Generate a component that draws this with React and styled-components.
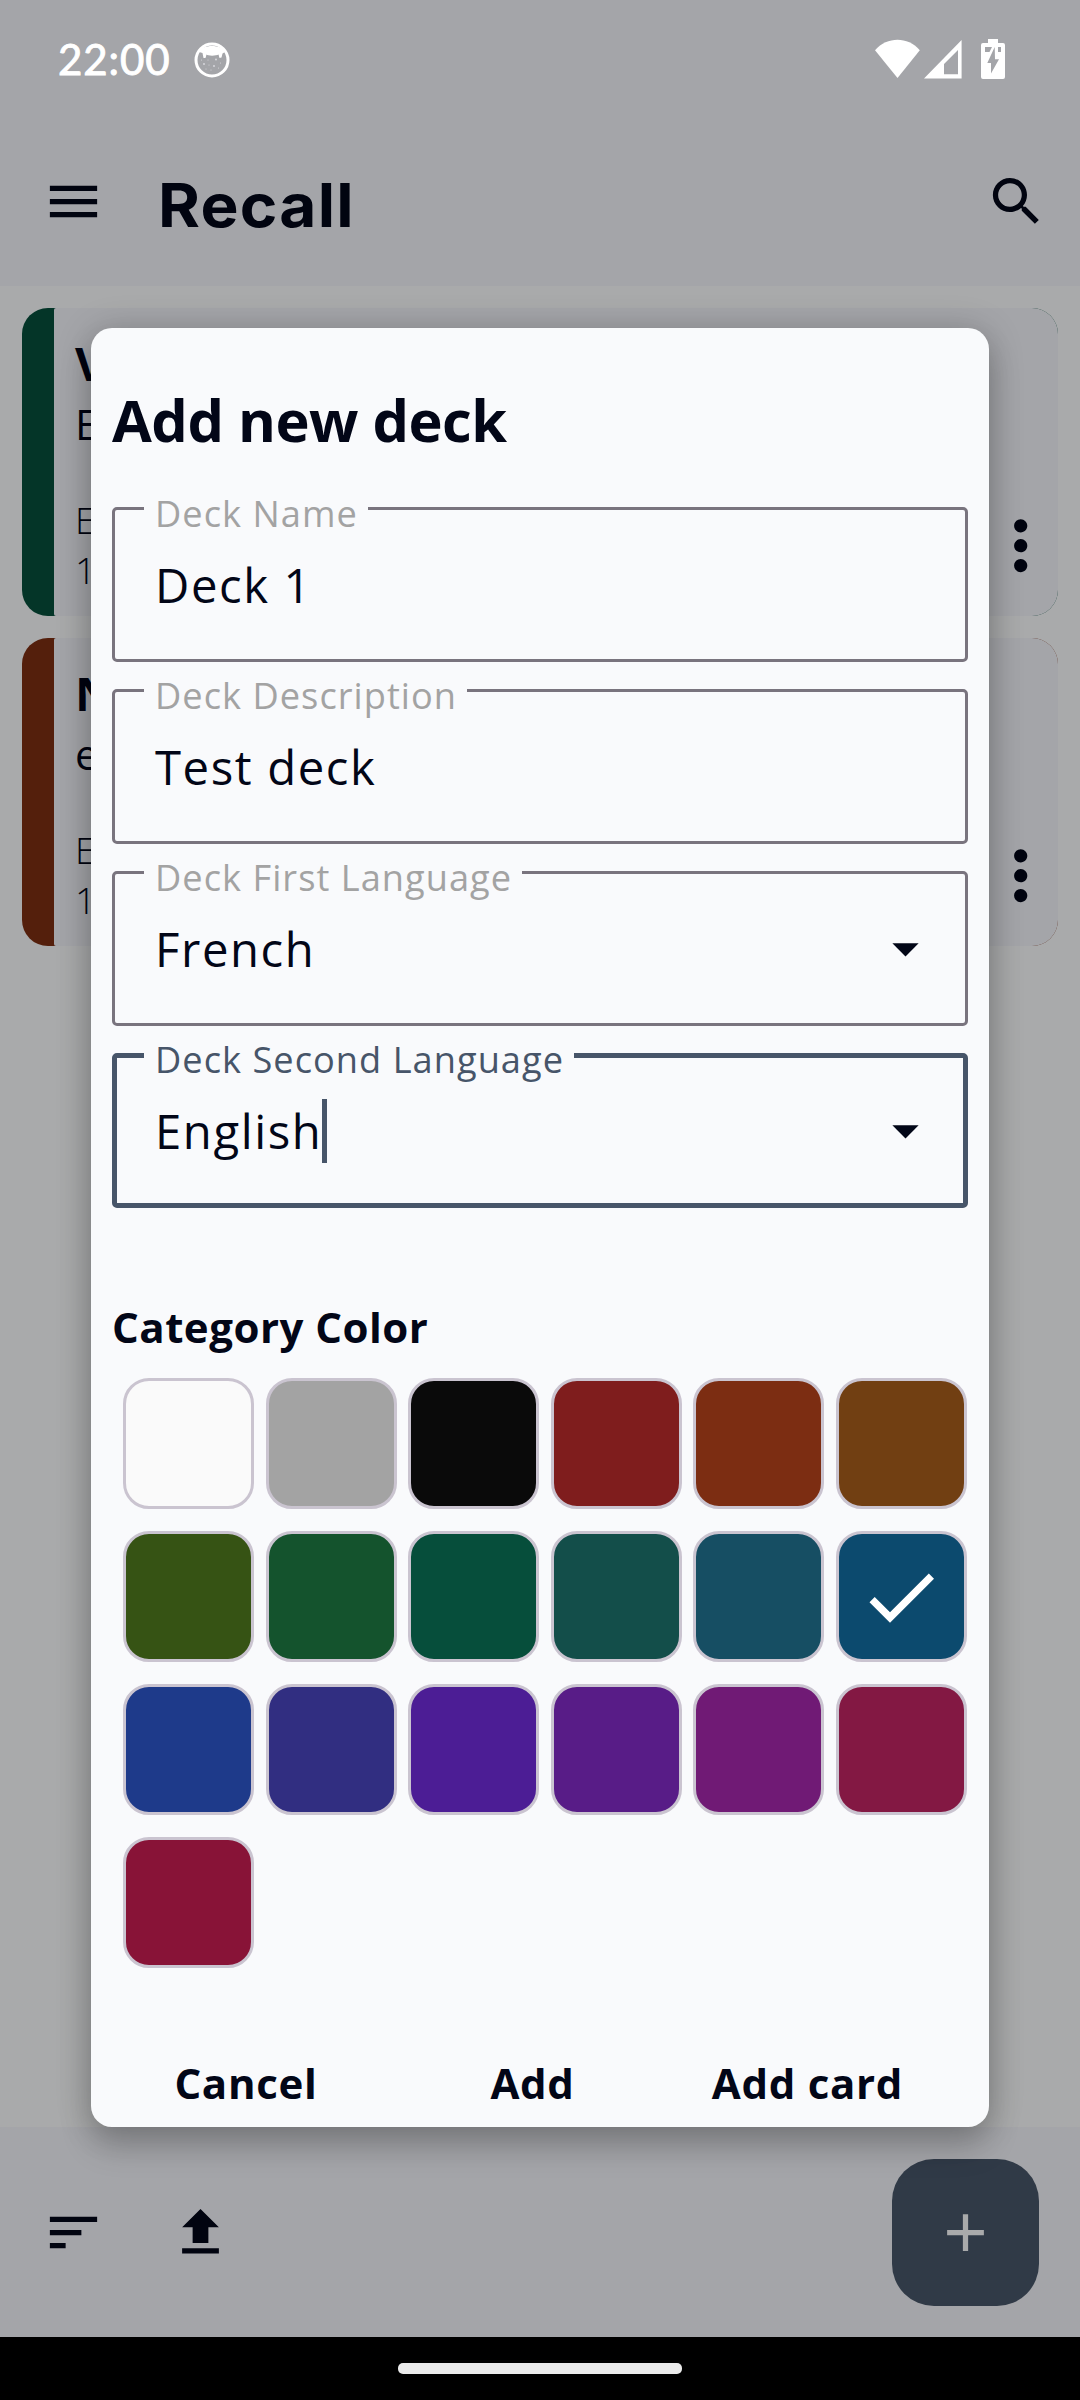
import React from "react";
import styled, { createGlobalStyle } from "styled-components";

const INK = "#020617";
const DIM_INK = "#010410";
const BAR = "#a4a5a9";

const GlobalStyle = createGlobalStyle`
  * { box-sizing: border-box; }
  body { margin: 0; background: #000; font-family: "Open Sans", "Noto Sans", sans-serif; }
`;

const Screen = styled.div`
  position: relative;
  width: 1080px;
  height: 2400px;
  overflow: hidden;
  display: flex;
  flex-direction: column;
  background: #a9aaab;
  color: ${DIM_INK};
`;

const TopArea = styled.header`
  height: 286px;
  flex: none;
  background: ${BAR};
`;

const StatusBar = styled.div`
  height: 117px;
  padding: 0 74px 0 58px;
  display: flex;
  align-items: center;
  color: #fff;
`;

const Clock = styled.span`
  width: 136px;
  font: 400 42px/50px Lato, sans-serif;
  letter-spacing: 0.9px;
  -webkit-text-stroke: 0.9px #fff;
`;

const MascotIcon = styled.svg`
  display: block;
  flex: none;
  margin-top: 2px;
`;

const StatusIcons = styled.div`
  margin-left: auto;
  display: flex;
  height: 42px;
`;

const AppBar = styled.div`
  height: 169px;
  padding: 0 32px 0 42px;
  display: flex;
  align-items: center;
`;

const AppTitle = styled.h1`
  margin: 6px auto 0 53px;
  font: 700 60px/72px Inter, sans-serif;
  letter-spacing: 1.2px;
  transform: scaleX(1.065);
  transform-origin: left;
`;

const Icon = styled.svg`
  display: block;
  flex: none;
  width: ${(p) => p.$size || 63}px;
  height: ${(p) => p.$size || 63}px;
  fill: currentColor;
`;

const DeckList = styled.main`
  flex: 1;
  padding: 22px;
  display: flex;
  flex-direction: column;
  gap: 22px;
`;

const DeckCard = styled.article`
  height: 308px;
  padding-left: 32px;
  border-radius: 26px;
  background: ${(p) => p.$accent};
`;

const DeckBody = styled.div`
  height: 308px;
  border-radius: 2px 26px 26px 2px;
  background: #a4a5a9;
  padding: 23px 0 0 21px;
  display: flex;
  justify-content: space-between;
`;

const DeckText = styled.div`
  display: flex;
  flex-direction: column;
`;

const DeckName = styled.div`
  font-size: 47.25px;
  line-height: 64px;
  font-weight: 700;
`;

const DeckNote = styled.div`
  font-size: 42px;
  line-height: 58px;
  margin-bottom: 42px;
`;

const DeckMeta = styled.div`
  font-size: 36.75px;
  line-height: 50px;
  font-weight: 300;
`;

const MoreSlot = styled.div`
  margin: 175px -2px 0 0;
`;

const BottomBar = styled.footer`
  height: 210px;
  flex: none;
  padding: 0 41px 0 42px;
  display: flex;
  align-items: center;
  gap: 64px;
  background: ${BAR};
`;

const Fab = styled.button`
  margin-left: auto;
  width: 147px;
  height: 147px;
  padding: 0;
  border: 0;
  border-radius: 42px;
  display: grid;
  place-items: center;
  background: #303a47;
  color: #a9aaab;
`;

const NavBar = styled.div`
  height: 63px;
  flex: none;
  padding-top: 26px;
  background: #000;
`;

const NavPill = styled.div`
  width: 284px;
  height: 11px;
  margin: 0 auto;
  border-radius: 5px;
  background: #ebebeb;
`;

const Dialog = styled.section`
  position: absolute;
  left: 91px;
  top: 328px;
  width: 898px;
  height: 1799px;
  padding: 52px 21px 0;
  border-radius: 21px;
  background: #f9fafc;
  color: ${INK};
  box-shadow: 0 20px 32px rgba(0, 0, 0, 0.18), 0 2px 36px rgba(0, 0, 0, 0.2);
`;

const DialogTitle = styled.h2`
  margin: 0;
  height: 79px;
  font-size: 57.75px;
  line-height: 79px;
  font-weight: 700;
  letter-spacing: -0.5px;
`;

const Fields = styled.div`
  margin-top: 24px;
  display: flex;
  flex-direction: column;
  gap: 3px;
`;

const Field = styled.fieldset`
  height: 179px;
  margin: 0;
  min-width: 0;
  border: ${(p) => (p.$focused ? "5px solid #475569" : "3px solid #79747e")};
  border-radius: 5px;
  padding: 0 ${(p) => (p.$focused ? 26 : 28)}px 0 ${(p) => (p.$focused ? 38 : 40)}px;
`;

const Legend = styled.legend`
  margin-left: -11px;
  padding: 0 10px 0 11px;
  height: ${(p) => (p.$focused ? 53 : 51)}px;
  font-size: 36.2px;
  line-height: 60px;
  letter-spacing: 1.03px;
  color: ${(p) => (p.$focused ? "#475569" : "#a3a3a3")};
`;

const Value = styled.div`
  height: 64px;
  margin-top: ${(p) => (p.$focused ? 17 : 19)}px;
  display: flex;
  align-items: center;
  font-size: 47.25px;
  line-height: 64px;
  letter-spacing: 1.6px;
`;

const Caret = styled.span`
  width: 5px;
  height: 64px;
  background: #475569;
`;

const DropIcon = styled(Icon)`
  margin: -2px 0 0 auto;
`;

const SectionTitle = styled.h3`
  margin: 90px 0 0;
  font-size: 42px;
  line-height: 58px;
  font-weight: 700;
  letter-spacing: 0.5px;
`;

const Swatches = styled.div`
  margin: 22px 0 0 11px;
  display: grid;
  grid-template-columns: repeat(6, 131px);
  column-gap: 11.6px;
  row-gap: 22px;
`;

const Swatch = styled.button`
  width: 131px;
  height: 131px;
  padding: 0;
  display: grid;
  place-items: center;
  border: 3px solid #cac4d0;
  border-radius: 26px;
  background: ${(p) => p.$color};
  color: #fff;
`;

const Actions = styled.div`
  margin-top: 86px;
  display: grid;
  grid-template-columns: 268px 305px 245px;
`;

const Action = styled.button`
  padding: 0;
  border: 0;
  background: none;
  color: inherit;
  font: 700 42px/58px "Open Sans", sans-serif;
  letter-spacing: 0.7px;
  white-space: nowrap;
`;

const decks = [
  { accent: "#043528", name: "V", note: "E", meta: ["E", "1"] },
  { accent: "#541f0c", name: "N", note: "e", meta: ["E", "1"] },
];

const fields = [
  { label: "Deck Name", value: "Deck 1" },
  { label: "Deck Description", value: "Test deck" },
  { label: "Deck First Language", value: "French", menu: true },
  { label: "Deck Second Language", value: "English", menu: true, focused: true },
];

const colors = [
  "#fafafa", "#a3a3a3", "#0a0a0a", "#7f1d1d", "#7c2d12", "#713f12",
  "#365314", "#14532d", "#064e3b", "#134e4a", "#164e63", "#0c4a6e",
  "#1e3a8a", "#312e81", "#4c1d95", "#581c87", "#701a75", "#831843",
  "#881337",
];
const selected = "#0c4a6e";

const Glyph = ({ d, size, as: Tag = Icon }) => (
  <Tag viewBox="0 0 24 24" $size={size}>
    <path d={d} />
  </Tag>
);

const Mascot = () => (
  <MascotIcon width="36" height="36" viewBox="0 0 36 36">
    <circle cx="18" cy="18" r="16" fill="none" stroke="#fff" strokeWidth="3" />
    <path
      fill="#fff"
      d="M5 10C8 2 28 2 31 10L28.500 11.500 27.500 15.500 25.500 16 24.500 12.500C22.500 14 13.500 14 12.500 12.500L11.500 16 9.500 16 8.500 11Z"
    />
    <g fill="#dcdce0">
      <circle cx="10" cy="22" r=".9" />
      <circle cx="20" cy="24" r=".9" />
      <circle cx="22" cy="17.500" r=".9" />
      <circle cx="14" cy="18" r=".5" />
      <circle cx="15" cy="23" r=".5" />
      <circle cx="12" cy="27" r=".5" />
      <circle cx="17" cy="28" r=".5" />
      <circle cx="24.500" cy="26" r=".5" />
      <circle cx="26.500" cy="21" r=".5" />
      <circle cx="7.500" cy="18" r=".5" />
    </g>
  </MascotIcon>
);

const SystemIcons = () => (
  <svg width="132" height="42" viewBox="0 0 132 42" fill="#fff">
    <path d="M1 12.200C13.500-1.700 33.500-1.700 45.800 12.200L23.500 40Z" />
    <path fillRule="evenodd" d="M87.600 2V40.500H50ZM84 12L70 26V36.300H84Z" />
    <path
      fillRule="evenodd"
      d="M114 1H124V5H129Q131 5 131 7V39Q131 41 129 41H109Q107 41 107 39V7Q107 5 109 5H114ZM111 9V14H115.500L118 9ZM124 9V14H127V9ZM120.700 9L113.300 25H117V35.500L125 21.300H121Z"
    />
  </svg>
);

export default function App() {
  return (
    <>
      <GlobalStyle />
      <Screen>
        <TopArea>
          <StatusBar>
            <Clock>22:00</Clock>
            <Mascot />
            <StatusIcons>
              <SystemIcons />
            </StatusIcons>
          </StatusBar>
          <AppBar>
            <Glyph d="M3 18h18v-2H3v2zm0-5h18v-2H3v2zm0-7v2h18V6H3z" />
            <AppTitle>Recall</AppTitle>
            <Glyph d="M15.5 14h-.79l-.28-.27C15.410 12.590 16 11.110 16 9.500 16 5.910 13.090 3 9.500 3S3 5.910 3 9.500 5.910 16 9.500 16c1.610 0 3.090-.59 4.230-1.570l.27.28v.79l5 4.990L20.490 19l-4.990-5zm-6 0C7.010 14 5 11.990 5 9.500S7.010 5 9.500 5 14 7.010 14 9.500 11.990 14 9.500 14z" />
          </AppBar>
        </TopArea>

        <DeckList>
          {decks.map((deck) => (
            <DeckCard key={deck.accent} $accent={deck.accent}>
              <DeckBody>
                <DeckText>
                  <DeckName>{deck.name}</DeckName>
                  <DeckNote>{deck.note}</DeckNote>
                  {deck.meta.map((line) => (
                    <DeckMeta key={line}>{line}</DeckMeta>
                  ))}
                </DeckText>
                <MoreSlot>
                  <Glyph
                    size={79.4}
                    d="M12 8c1.100 0 2-.9 2-2s-.9-2-2-2-2 .9-2 2 .9 2 2 2zm0 2c-1.100 0-2 .9-2 2s.9 2 2 2 2-.9 2-2-.9-2-2-2zm0 6c-1.100 0-2 .9-2 2s.9 2 2 2 2-.9 2-2-.9-2-2-2z"
                  />
                </MoreSlot>
              </DeckBody>
            </DeckCard>
          ))}
        </DeckList>

        <BottomBar>
          <Glyph d="M3 18h6v-2H3v2zM3 6v2h18V6H3zm0 7h12v-2H3v2z" />
          <Glyph d="M5 20h14v-2H5v2zM9 16h6v-6h4l-7-7-7 7h4v6z" />
          <Fab aria-label="Add">
            <Glyph d="M19 13h-6v6h-2v-6H5v-2h6V5h2v6h6v2z" />
          </Fab>
        </BottomBar>
        <NavBar>
          <NavPill />
        </NavBar>

        <Dialog role="dialog">
          <DialogTitle>Add new deck</DialogTitle>
          <Fields>
            {fields.map(({ label, value, menu, focused }) => (
              <Field key={label} $focused={focused}>
                <Legend $focused={focused}>{label}</Legend>
                <Value $focused={focused}>
                  {value}
                  {focused && <Caret />}
                  {menu && <Glyph as={DropIcon} d="M7 10l5 5 5-5z" />}
                </Value>
              </Field>
            ))}
          </Fields>
          <SectionTitle>Category Color</SectionTitle>
          <Swatches>
            {colors.map((color) => (
              <Swatch key={color} $color={color} aria-label={color}>
                {color === selected && (
                  <Glyph size={88} d="M9 16.170L4.830 12l-1.420 1.410L9 19 21 7l-1.410-1.410z" />
                )}
              </Swatch>
            ))}
          </Swatches>
          <Actions>
            <Action>Cancel</Action>
            <Action>Add</Action>
            <Action>Add card</Action>
          </Actions>
        </Dialog>
      </Screen>
    </>
  );
}
